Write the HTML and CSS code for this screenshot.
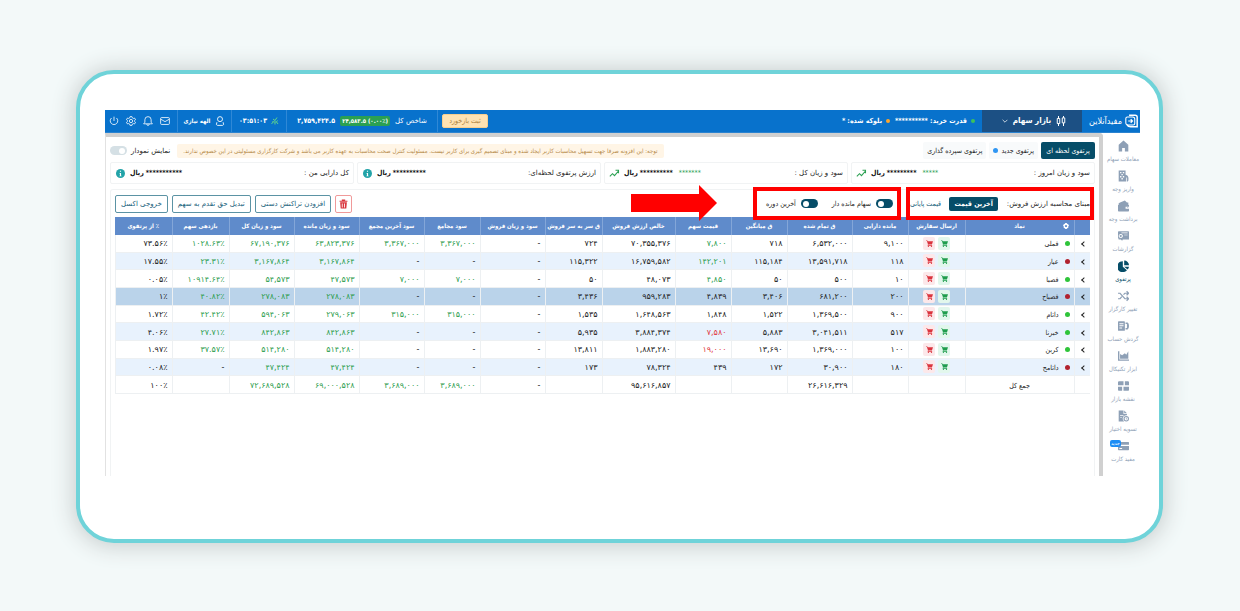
FILE: index.html
```html
<!DOCTYPE html>
<html lang="fa" dir="rtl">
<head>
<meta charset="utf-8">
<title>پرتفوی لحظه ای</title>
<link rel="stylesheet" href="styles.css">
</head>
<body>
<svg class="sprite" aria-hidden="true">
  <symbol id="cart" viewBox="0 0 16 16"><path d="M0 1h3l1 2h12l-2.500 7H5.500L5 11.500h9V13H3.500l1-3.500L2 2.500H0z"/><circle cx="5.500" cy="14.500" r="1.500"/><circle cx="12.500" cy="14.500" r="1.500"/></symbol>
  <symbol id="trend" viewBox="0 0 16 12"><path d="M1 11l4-4 3 3 6-7M9.500 2H14v4.500" fill="none" stroke="currentColor" stroke-width="1.600"/></symbol>
  <symbol id="info" viewBox="0 0 16 16"><circle cx="8" cy="8" r="8"/><path d="M7 3h2v2H7zM6 7h3v5h1v1H6v-1h1V8H6z" fill="#fff"/></symbol>
</svg>
<main class="device">
<div class="screen">
  <header class="topbar">
    <a class="brand" href="#"><svg viewBox="0 0 16 16"><path d="M5 1h7.500Q15 1 15 3.500v11.500H7Q4 15 2.500 13" fill="none" stroke="#fff" stroke-width="1.800"/><path d="M3 3h6.500Q12 3 12 5.500V11q0 2-2 2H4q-3 0-3-3V5q0-2 2-2z" fill="none" stroke="#fff" stroke-width="1.300"/><path d="M4 8h5M7 5.800L9.200 8 7 10.200" fill="none" stroke="#fff" stroke-width="1.500"/></svg><span>مفیدآنلاین</span></a>
    <button class="market"><svg viewBox="0 0 16 16" class="i10"><path d="M4 0v4M4 12v4M12 0v3M12 11v5M2 4h4v8H2zM10 3h4v8h-4z" fill="none" stroke="#fff" stroke-width="1.600"/></svg><span>بازار سهام</span><svg viewBox="0 0 10 10" class="i6"><path d="M1 3l4 4 4-4" fill="none" stroke="#fff" stroke-width="1.200"/></svg></button>
    <div class="power"><i class="dot green"></i><span>قدرت خرید: **********</span><i class="dot orange"></i><span>بلوکه شده: *</span></div>
    <div class="seg feedback"><button>ثبت بازخورد</button></div>
    <div class="seg index"><span>شاخص کل</span><b class="badge" dir="ltr">۲۴,۵۸۳.۵ (۰.۰۰٪)</b><b class="total">۲,۷۵۹,۴۲۴.۵</b></div>
    <div class="seg clock"><svg viewBox="0 0 16 16" class="i8"><path d="M4 4l4 3 4-6M8 7v8M3 8l3 3M13 7l-3 4M1 14l4-5M14 14l-3-4" fill="none" stroke="#5ed38c" stroke-width="2"/></svg><b dir="ltr">۰۳:۵۱:۰۳</b></div>
    <div class="seg user"><svg viewBox="0 0 16 16" class="i10"><circle cx="8" cy="5" r="4" fill="none" stroke="#fff" stroke-width="1.400"/><path d="M3 10Q1 15 4 15h8q3 0 1-5" fill="none" stroke="#fff" stroke-width="1.400"/></svg><b>الهه نیازی</b></div>
    <nav class="seg tools">
      <button aria-label="پیام ها"><svg viewBox="0 0 16 16"><path d="M2.500 2.500h11Q15 2.500 15 4v8q0 1.500-1.500 1.500h-11Q1 13.500 1 12V4q0-1.500 1.500-1.500zM1 5l7 4 7-4" /></svg></button>
      <button aria-label="اعلان ها"><svg viewBox="0 0 16 16"><path d="M8 1q5 0 5 5v4l2 2.500H1L3 10V6q0-5 5-5zM6 13q0 2 2 2t2-2"/></svg></button>
      <button aria-label="تنظیمات"><svg viewBox="0 0 16 16"><path d="M6.500 1h3l.6 2 1.600.9 2-.6 1.500 2.600L13.700 7.200v1.600l1.500 1.300-1.500 2.600-2-.6-1.600.9-.6 2h-3l-.6-2-1.600-.9-2 .6L.8 10.100l1.500-1.300V7.200L.8 5.900l1.500-2.600 2 .6L5.900 3z"/><circle cx="8" cy="8" r="2.600"/></svg></button>
      <button aria-label="خروج"><svg viewBox="0 0 16 16"><path d="M8 1v7M4 3.200a6 6 0 1 0 8 0"/></svg></button>
    </nav>
  </header>

  <div class="body">
    <nav class="side">
      <a href="#"><svg viewBox="0 0 16 16"><path d="M8 0l7 6v10h-5v-5H6v5H1V6z"/></svg>معاملات سهام</a>
      <a href="#"><svg viewBox="0 0 16 16"><path fill-rule="evenodd" d="M1 0h10v6l2 1q3 2 2 8l-1 1h-1q1-5-1-7v7H1zM3 2v2h2V2zm4 0v2h2V2zM5 5v2h2V5zM3 8v2h2V8zm4 0v2h2V8zm-2 3v2h2v-2z"/></svg>واریز وجه</a>
      <a href="#"><svg viewBox="0 0 16 16"><path fill-rule="evenodd" d="M3 3l7-3 3 3h2v3H1V4zM1 6h14q1 0 1 1v2h-5v3h5v3q0 1-1 1H1q-1 0-1-1V7q0-1 1-1zM13 10h2v1h-2z"/></svg>برداشت وجه</a>
      <a href="#"><svg viewBox="0 0 16 16"><path fill-rule="evenodd" d="M1 1h14q1 0 1 1v11H7l-1 2-2-2H1l-1-3V2q0-1 1-1zM5 3v1h9V3zM9 6v1h5V6zM4 5a3 3 0 1 0 .1 0zM4 6.500a1.500 1.500 0 1 1-.1 0z"/></svg>گزارشات</a>
      <a href="#" class="on"><svg viewBox="0 0 16 16"><path d="M7 1v8l6 5A8 8 0 1 1 7 1zM9 0a7 7 0 0 1 7 7H9zM9 9h7a7 7 0 0 1-2 4z"/></svg>پرتفوی</a>
      <a href="#"><svg viewBox="0 0 16 16"><path d="M0 4h3l7 8h5M0 12h3l2.500-3M8 6l2-2h5M12.500 1l3 3-3 3M12.500 9l3 3-3 3" fill="none" stroke="currentColor" stroke-width="1.800"/></svg>تغییر کارگزار</a>
      <a href="#"><svg viewBox="0 0 16 16"><path fill-rule="evenodd" d="M1 1h8q1 0 1 1v12q0 1-1 1H1q-1 0-1-1V2q0-1 1-1zm1 3v1.500h6V4zm0 3v1.500h6V7zm0 3v1.500h4V10zM11 3h3q2 1 2 5t-2 5h-3v-2h2V5h-2z"/></svg>گردش حساب</a>
      <a href="#"><svg viewBox="0 0 16 16"><path d="M0 1h2v12h14v2H0zM3 5l3 2 4-3 2 2 3-5v11H3z"/></svg>ابزار تکنیکال</a>
      <a href="#"><svg viewBox="0 0 16 16"><path d="M1 1h7v6H0V2zM10 1h5l1 1v5h-6zM0 9h6v6H1l-1-1zM8 9h8v5l-1 1H8z"/></svg>نقشه بازار</a>
      <a href="#"><svg viewBox="0 0 16 16"><path fill-rule="evenodd" d="M1 0h7v5h5v2a5 5 0 0 0-5 8l1 1H1zM9 0l4 4H9zM3 7v1h5V7zm0 3v1h3v-1z"/><circle cx="12" cy="12" r="3.200" fill="none" stroke="currentColor" stroke-width="1.600"/><path d="M11.500 10h1v3h-1z"/></svg>تسویه اختیار</a>
      <a href="#"><em>جدید</em><svg viewBox="0 0 16 16"><path fill-rule="evenodd" d="M1 2h14q1 0 1 1v3H0V3q0-1 1-1zM0 8h16v5q0 1-1 1H1q-1 0-1-1zm2 3v1.500h4V11z"/></svg>مفید کارت</a>
    </nav>

    <section class="content">
      <div class="tabs">
        <button class="tab active">پرتفوی لحظه ای</button>
        <button class="tab">پرتفوی جدید <i class="dot blue"></i></button>
        <button class="tab">پرتفوی سپرده گذاری</button>
        <p class="notice">توجه: این افزونه صرفا جهت تسهیل محاسبات کاربر ایجاد شده و مبنای تصمیم گیری برای کاربر نیست. مسئولیت کنترل صحت محاسبات به عهده کاربر می باشد و شرکت کارگزاری مسئولیتی در این خصوص ندارند.</p>
        <label class="chart">نمایش نمودار<input type="checkbox" class="switch off"></label>
      </div>

      <div class="stats">
        <div class="stat"><span>سود و زیان امروز :</span><span class="val"><i class="gain">*****</i><b>*********</b><b>ریال</b><svg class="trend"><use href="#trend"/></svg></span></div>
        <div class="stat"><span>سود و زیان کل :</span><span class="val"><i class="gain">*******</i><b>**********</b><b>ریال</b><svg class="trend"><use href="#trend"/></svg></span></div>
        <div class="stat"><span>ارزش پرتفوی لحظه‌ای:</span><span class="val"><b>**********</b><b>ریال</b><svg class="info"><use href="#info"/></svg></span></div>
        <div class="stat"><span>کل دارایی من :</span><span class="val"><b>***********</b><b>ریال</b><svg class="info"><use href="#info"/></svg></span></div>
      </div>

      <div class="panel">
        <div class="toolbar">
          <div class="mark basis"><span>مبنای محاسبه ارزش فروش:</span><div class="choice"><button class="active">آخرین قیمت</button><button>قیمت پایانی</button></div></div>
          <div class="mark filters"><label>سهام مانده دار<input type="checkbox" class="switch" checked></label><label>آخرین دوره<input type="checkbox" class="switch" checked></label></div>
          <svg class="arrow" viewBox="0 0 86 36"><path d="M0 9h68V0l18 18-18 18v-9H0z" fill="#f00"/></svg>
          <div class="actions">
            <button class="act del" aria-label="حذف"><svg viewBox="0 0 16 16"><path fill-rule="evenodd" d="M5 0h6v2h4v2H1V2h4zM2 5h12l-1 11H3zm3 2v7h1.500V7zm4 0v7h1.500V7z"/></svg></button>
            <button class="act">افزودن تراکنش دستی</button>
            <button class="act">تبدیل حق تقدم به سهم</button>
            <button class="act">خروجی اکسل</button>
          </div>
        </div>

        <table>
          <colgroup><col class="w16"><col class="w109"><col class="w57"><col class="w56"><col class="w65"><col class="w56"><col class="w56"><col class="w73"><col class="w57"><col class="w65"><col class="w56"><col class="w65"><col class="w65"><col class="w65"><col class="w57"><col class="w57"></colgroup>
          <thead><tr><th></th><th><div class="sym"><svg viewBox="0 0 16 16"><path fill-rule="evenodd" d="M6 0h4l1 2 3 1 2 4-2 2 0 4-3 1-1 2H6l-1-2-3-1V9L0 7l2-4 3-1zM8 5a3 3 0 1 0 .1 0z"/></svg><span>نماد</span></div></th><th>ارسال سفارش</th><th>مانده دارایی</th><th>ق تمام شده</th><th>ق میانگین</th><th>قیمت سهم</th><th>خالص ارزش فروش</th><th>ق سر به سر فروش</th><th>سود و زیان فروش</th><th>سود مجامع</th><th>سود آخرین مجمع</th><th>سود و زیان مانده</th><th>سود و زیان کل</th><th>بازدهی سهم</th><th>٪ از پرتفوی</th></tr></thead>
          <tbody>
            <tr><td><button class="exp" aria-label="باز کردن"></button></td><td class="name"><i class="dot up"></i>فملی</td><td><div class="orders"><button class="buy" aria-label="خرید"><svg><use href="#cart"/></svg></button><button class="sell" aria-label="فروش"><svg><use href="#cart"/></svg></button></div></td><td>۹,۱۰۰</td><td>۶,۵۳۲,۰۰۰</td><td>۷۱۸</td><td class="g">۷,۸۰۰</td><td>۷۰,۳۵۵,۳۷۶</td><td>۷۲۴</td><td>-</td><td class="g">۳,۳۶۷,۰۰۰</td><td class="g">۳,۳۶۷,۰۰۰</td><td class="g">۶۳,۸۲۳,۳۷۶</td><td class="g">۶۷,۱۹۰,۳۷۶</td><td class="g"><bdo dir="ltr">۱۰۲۸.۶۳٪</bdo></td><td><bdo dir="ltr">۷۳.۵۶٪</bdo></td></tr>
            <tr><td><button class="exp" aria-label="باز کردن"></button></td><td class="name"><i class="dot down"></i>عیار</td><td><div class="orders"><button class="buy" aria-label="خرید"><svg><use href="#cart"/></svg></button><button class="sell" aria-label="فروش"><svg><use href="#cart"/></svg></button></div></td><td>۱۱۸</td><td>۱۳,۵۹۱,۷۱۸</td><td>۱۱۵,۱۸۴</td><td class="g">۱۴۲,۲۰۱</td><td>۱۶,۷۵۹,۵۸۲</td><td>۱۱۵,۳۲۲</td><td>-</td><td>-</td><td>-</td><td class="g">۳,۱۶۷,۸۶۴</td><td class="g">۳,۱۶۷,۸۶۴</td><td class="g"><bdo dir="ltr">۲۳.۳۱٪</bdo></td><td><bdo dir="ltr">۱۷.۵۵٪</bdo></td></tr>
            <tr><td><button class="exp" aria-label="باز کردن"></button></td><td class="name"><i class="dot up"></i>فصبا</td><td><div class="orders"><button class="buy" aria-label="خرید"><svg><use href="#cart"/></svg></button><button class="sell" aria-label="فروش"><svg><use href="#cart"/></svg></button></div></td><td>۱۰</td><td>۵۰۰</td><td>۵۰</td><td class="g">۴,۸۵۰</td><td>۴۸,۰۷۳</td><td>۵۰</td><td>-</td><td class="g">۷,۰۰۰</td><td class="g">۷,۰۰۰</td><td class="g">۴۷,۵۷۳</td><td class="g">۵۴,۵۷۳</td><td class="g"><bdo dir="ltr">۱۰۹۱۴.۶۴٪</bdo></td><td><bdo dir="ltr">۰.۰۵٪</bdo></td></tr>
            <tr class="selected"><td><button class="exp" aria-label="باز کردن"></button></td><td class="name"><i class="dot down"></i>فصباح</td><td><div class="orders"><button class="buy" aria-label="خرید"><svg><use href="#cart"/></svg></button><button class="sell" aria-label="فروش"><svg><use href="#cart"/></svg></button></div></td><td>۲۰۰</td><td>۶۸۱,۲۰۰</td><td>۳,۴۰۶</td><td>۴,۸۳۹</td><td>۹۵۹,۲۸۳</td><td>۳,۴۳۶</td><td>-</td><td>-</td><td>-</td><td class="g">۲۷۸,۰۸۳</td><td class="g">۲۷۸,۰۸۳</td><td class="g"><bdo dir="ltr">۴۰.۸۲٪</bdo></td><td><bdo dir="ltr">۱٪</bdo></td></tr>
            <tr><td><button class="exp" aria-label="باز کردن"></button></td><td class="name"><i class="dot up"></i>داتام</td><td><div class="orders"><button class="buy" aria-label="خرید"><svg><use href="#cart"/></svg></button><button class="sell" aria-label="فروش"><svg><use href="#cart"/></svg></button></div></td><td>۹۰۰</td><td>۱,۳۶۹,۵۰۰</td><td>۱,۵۲۲</td><td>۱,۸۴۸</td><td>۱,۶۴۸,۵۶۳</td><td>۱,۵۳۵</td><td>-</td><td class="g">۳۱۵,۰۰۰</td><td class="g">۳۱۵,۰۰۰</td><td class="g">۲۷۹,۰۶۳</td><td class="g">۵۹۴,۰۶۳</td><td class="g"><bdo dir="ltr">۴۲.۴۲٪</bdo></td><td><bdo dir="ltr">۱.۷۲٪</bdo></td></tr>
            <tr><td><button class="exp" aria-label="باز کردن"></button></td><td class="name"><i class="dot up"></i>خبرنا</td><td><div class="orders"><button class="buy" aria-label="خرید"><svg><use href="#cart"/></svg></button><button class="sell" aria-label="فروش"><svg><use href="#cart"/></svg></button></div></td><td>۵۱۷</td><td>۳,۰۴۱,۵۱۱</td><td>۵,۸۸۳</td><td class="r">۷,۵۸۰</td><td>۳,۸۸۴,۳۷۴</td><td>۵,۹۳۵</td><td>-</td><td>-</td><td>-</td><td class="g">۸۴۲,۸۶۳</td><td class="g">۸۴۲,۸۶۳</td><td class="g"><bdo dir="ltr">۲۷.۷۱٪</bdo></td><td><bdo dir="ltr">۴.۰۶٪</bdo></td></tr>
            <tr><td><button class="exp" aria-label="باز کردن"></button></td><td class="name"><i class="dot up"></i>کربن</td><td><div class="orders"><button class="buy" aria-label="خرید"><svg><use href="#cart"/></svg></button><button class="sell" aria-label="فروش"><svg><use href="#cart"/></svg></button></div></td><td>۱۰۰</td><td>۱,۳۶۹,۰۰۰</td><td>۱۳,۶۹۰</td><td class="r">۱۹,۰۰۰</td><td>۱,۸۸۳,۲۸۰</td><td>۱۳,۸۱۱</td><td>-</td><td>-</td><td>-</td><td class="g">۵۱۴,۲۸۰</td><td class="g">۵۱۴,۲۸۰</td><td class="g"><bdo dir="ltr">۳۷.۵۷٪</bdo></td><td><bdo dir="ltr">۱.۹۷٪</bdo></td></tr>
            <tr><td><button class="exp" aria-label="باز کردن"></button></td><td class="name"><i class="dot down"></i>داتامح</td><td><div class="orders"><button class="buy" aria-label="خرید"><svg><use href="#cart"/></svg></button><button class="sell" aria-label="فروش"><svg><use href="#cart"/></svg></button></div></td><td>۱۸۰</td><td>۳۰,۹۰۰</td><td>۱۷۲</td><td>۴۳۹</td><td>۷۸,۳۲۴</td><td>۱۷۳</td><td>-</td><td>-</td><td>-</td><td class="g">۴۷,۴۲۴</td><td class="g">۴۷,۴۲۴</td><td>-</td><td><bdo dir="ltr">۰.۰۸٪</bdo></td></tr>
            <tr><td></td><td class="sum">جمع کل</td><td></td><td></td><td>۲۶,۶۱۶,۳۲۹</td><td></td><td></td><td>۹۵,۶۱۶,۸۵۷</td><td></td><td>-</td><td class="g">۳,۶۸۹,۰۰۰</td><td class="g">۳,۶۸۹,۰۰۰</td><td class="g">۶۹,۰۰۰,۵۲۸</td><td class="g">۷۲,۶۸۹,۵۲۸</td><td></td><td><bdo dir="ltr">۱۰۰٪</bdo></td></tr>
          </tbody>
        </table>
      </div>
    </section>
  </div>
</div>
</main>
</body>
</html>
```

FILE: styles.css
```css
* { box-sizing: border-box; }
body { margin: 0; background: #f3f9f9; color: #222; font: 7px/12px "DejaVu Sans Condensed", "DejaVu Sans", sans-serif; overflow: hidden; }
button { font: inherit; color: inherit; background: none; border: 0; padding: 0; margin: 0; white-space: nowrap; }
a { color: inherit; text-decoration: none; }
i { font-style: normal; }
svg { display: block; fill: currentColor; flex: none; }
.sprite { position: absolute; width: 0; height: 0; }

.device { margin: 70px 77px 68px 76px; padding: 36px 19px 63px 25px; background: #fff; border: 4px solid #6fd3d9; border-radius: 38px; box-shadow: 0 1px 22px 3px #c9cfcf; }
.screen { display: flex; flex-direction: column; }

.topbar { display: flex; height: 23px; background: #0872cc; border-bottom: 1px solid #2b83d0; color: #fff; white-space: nowrap; }
.brand { width: 58px; display: flex; align-items: center; padding-right: 2px; gap: 3px; font-size: 9px; }
.brand svg { width: 13px; height: 14px; }
.market { width: 100px; background: #1c5084; display: flex; align-items: center; justify-content: center; gap: 5px; padding-right: 14px; font-size: 8px; font-weight: bold; }
.market .i6 { margin-left: 18px; }
.i10 { width: 10px; height: 10px; }
.i8 { width: 8px; height: 8px; }
.i6 { width: 6px; height: 6px; }
.power { flex: 1; display: flex; align-items: center; gap: 4px; padding-right: 7px; font-weight: bold; }
.dot { display: inline-block; width: 5px; height: 5px; border-radius: 50%; flex: none; }
.power .dot { width: 4px; height: 4px; }
.green { background: #3cc25c; }
.orange { background: #ffa62b; margin-right: 1px; }
.blue { background: #2f96f3; }
.seg { display: flex; align-items: center; justify-content: center; border-left: 1px solid #2f88d6; gap: 4px; }
.feedback { width: 55px; }
.feedback button { width: 46px; height: 14px; background: #ffe3b3; border: 1px solid #f7cf90; border-radius: 2px; color: #ad8240; }
.index { width: 151px; gap: 5px; font-family: "DejaVu Sans", sans-serif; }
.badge { background: #2ba052; border-radius: 2px; padding: 0 2px; font: bold 6px/10px "DejaVu Sans Condensed", sans-serif; }
.index .total { font-family: "DejaVu Sans Condensed", sans-serif; }
.clock { width: 55px; }
.user { width: 54px; gap: 5px; }
.user b { font-size: 6px; }
.seg.tools { width: 72px; border: 0; gap: 7px; justify-content: flex-start; padding-right: 7px; }
.tools svg { width: 10px; height: 10px; fill: none; stroke: #fff; stroke-width: 1.3; }

.body { display: flex; }
.side { width: 37px; padding: 7px 0 0 3px; display: flex; flex-direction: column; color: #8ea0b6; font-size: 6px; line-height: 9px; }
.side a { position: relative; height: 30px; display: flex; flex-direction: column; align-items: center; gap: 2px; white-space: nowrap; }
.side a:last-child { height: 36px; }
.side svg { width: 11px; height: 12px; }
.side .on { color: #064d68; }
.side em { position: absolute; top: 0; left: 4px; background: #1d8df5; color: #fff; border-radius: 2px; padding: 0 1px; font-size: 5px; line-height: 7px; font-style: normal; }

.content { flex: 1; min-width: 0; display: flex; flex-direction: column; padding: 5px 4px 0 4px; border: solid #d0d0d0; border-width: 4px 4px 0 1px; border-left-color: #e2e2e2; border-radius: 0 4px 0 0; }
.tabs { display: flex; align-items: center; height: 17px; gap: 3px; white-space: nowrap; margin-bottom: 3px; }
.tab { height: 17px; padding: 0 4px; background: #f8fafb; border-radius: 2px; }
.tab .dot { margin-right: 1px; }
.tab.active, .choice .active { background: #064d68; color: #fff; }
.choice .active { font-weight: bold; }
.tab.active { min-width: 54px; }
.notice { margin: 0 auto 0 4px; height: 14px; padding: 0 6px; background: #fff5e6; color: #b58a48; border-radius: 2px; font-size: 6px; line-height: 14px; }
.chart { display: flex; align-items: center; gap: 4px; font-family: "DejaVu Sans", sans-serif; }
.switch { appearance: none; margin: 0; width: 17px; height: 9px; border-radius: 5px; background: #064d68; display: flex; align-items: center; padding: 0 2px; }
.switch::before { content: ""; width: 6px; height: 6px; border-radius: 50%; background: #fff; margin-right: auto; }
.switch.off { background: #d5e0e5; }
.switch.off::before { margin: 0; }

.stats { display: grid; grid-template-columns: repeat(4, 1fr); gap: 3px; font-family: "DejaVu Sans", sans-serif; }
.stat { height: 22px; border: 1px solid #f1f3f4; border-radius: 2px; padding: 0 4px; display: flex; align-items: center; justify-content: space-between; white-space: nowrap; }
.val { display: flex; align-items: center; gap: 2px; color: #111; font-family: "DejaVu Sans Condensed", sans-serif; }
.gain, .trend { color: #2ba052; }
.gain { margin-left: 4px; }
.trend { width: 11px; height: 8px; margin-right: 2px; }
.info { width: 9px; height: 9px; margin: 0 3px 0 1px; color: #22a3a8; }

.panel { flex: 1; margin-top: 5px; border: 1px solid #f1f3f4; border-bottom: 0; border-radius: 3px 3px 0 0; padding: 0 4px; }
.toolbar { position: relative; display: flex; align-items: center; height: 27px; white-space: nowrap; font-family: "DejaVu Sans", sans-serif; }
.mark { position: relative; z-index: 1; height: 25px; display: flex; align-items: center; justify-content: space-between; outline: 4px solid #f00; }
.basis { width: 180px; }
.choice { display: flex; gap: 8px; color: #17607a; font-family: "DejaVu Sans Condensed", sans-serif; }
.choice button { height: 14px; border-radius: 2px; }
.choice .active { width: 49px; }
.filters { width: 140px; margin-right: 13px; padding: 0 4px 0 9px; }
.filters label { display: flex; flex-direction: row-reverse; align-items: center; gap: 5px; font-family: "DejaVu Sans Condensed", sans-serif; }
.arrow { position: absolute; z-index: 1; right: 373px; top: -5px; width: 86px; height: 36px; }
.actions { display: flex; gap: 4px; margin-right: auto; }
.act { height: 18px; padding: 0 5px; border: 1px solid #5b93a4; border-radius: 2px; color: #17607a; }
.del { padding: 0 3px; border-color: #f09a9a; color: #d9363e; }
.del svg { width: 9px; height: 10px; }

table { width: 100%; height: 177px; table-layout: fixed; border-collapse: collapse; white-space: nowrap; }
.w16 { width: 16px; } .w56 { width: 56px; } .w57 { width: 57px; } .w65 { width: 65px; } .w73 { width: 73px; } .w109 { width: 109px; }
th { height: 18px; padding: 0; background: #5f8bcb; color: #fff; font-size: 6px; border-left: 1px solid #83a6d8; text-align: center; }
td { padding: 2px 4px 0; border-left: 1px solid #edf0f2; border-bottom: 1px solid #edf0f2; font: 8px/12px "DejaVu Sans", sans-serif; }
th:last-child { border-left: 0; }
tbody tr:nth-child(even) { background: #e8f2fd; }
tbody .selected:nth-child(even) { background: #bad3ea; }
.g { color: #2f9e50; }
.r { color: #e0393f; }
.sym { display: flex; align-items: center; padding: 0 5px; }
.sym svg { width: 6px; height: 6px; }
.sym span { flex: 1; padding-left: 6px; }
.name, .sum { font: 7px/12px "DejaVu Sans Condensed", sans-serif; }
.name .dot { margin-left: 6px; }
.up { background: #2fc43a; }
.down { background: #b1222f; }
.sum { text-align: center; }
.orders { display: flex; justify-content: center; gap: 3px; margin-top: -2px; }
.orders button { width: 12px; height: 13px; border-radius: 2px; display: grid; place-items: center; }
.orders svg { width: 7px; height: 7px; }
.buy { background: #e2f7ec; color: #1f9d4c; }
.sell { background: #fce8ea; color: #da343e; }
.exp { display: block; width: 4px; height: 4px; border: solid #222; border-width: 0 0 1px 1px; transform: rotate(45deg); }
```
